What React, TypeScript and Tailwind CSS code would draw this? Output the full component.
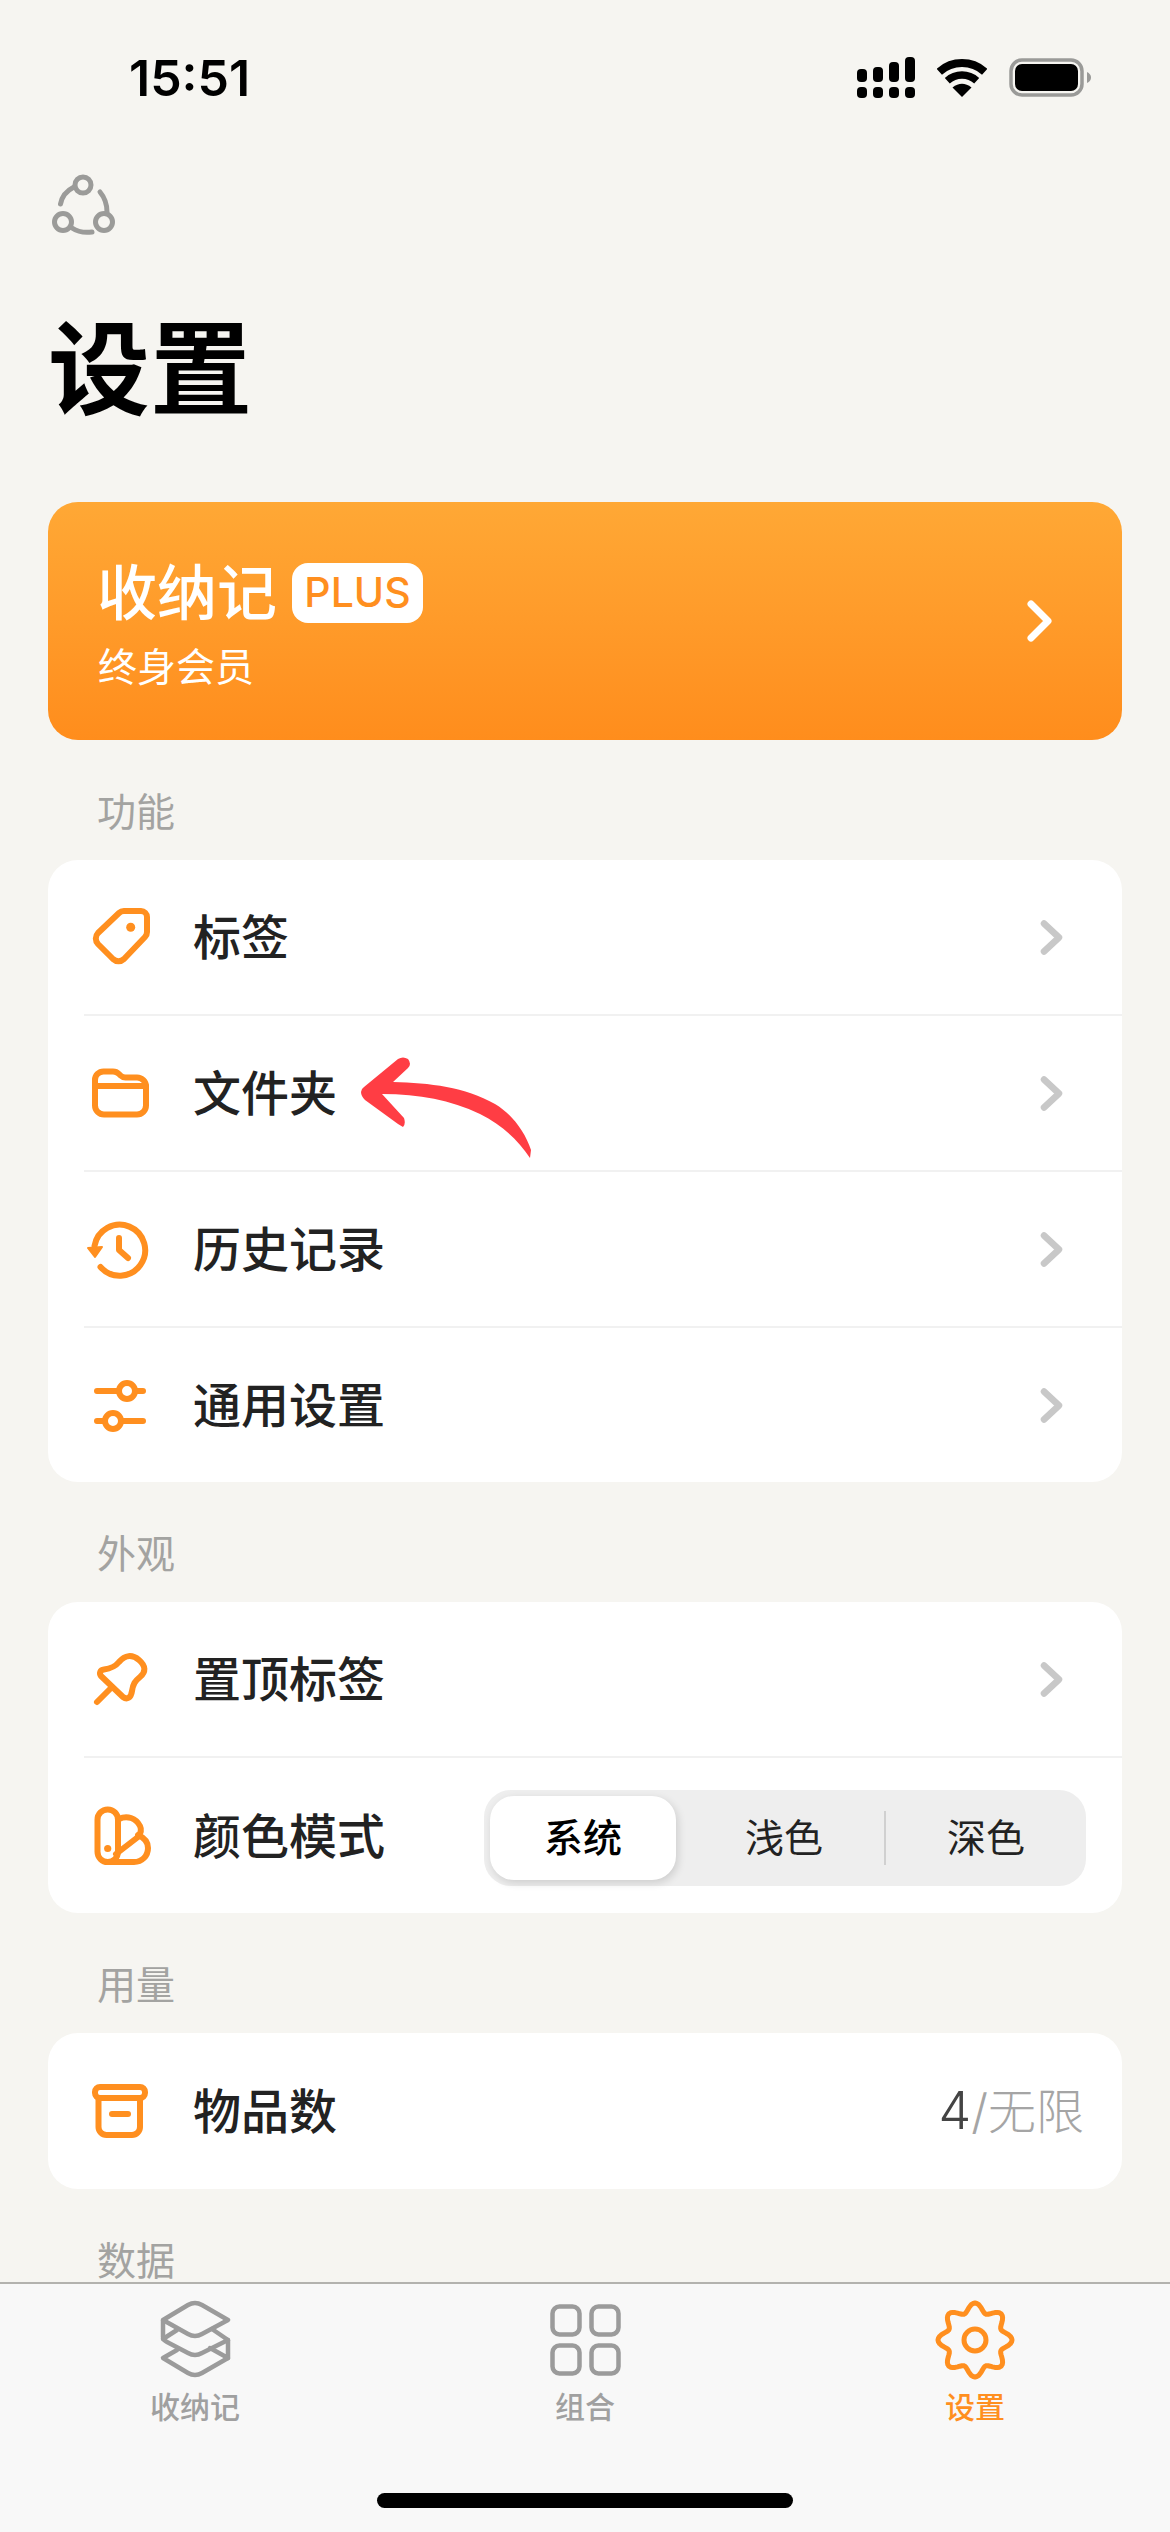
import type { ReactNode } from "react";

const orange = "#ff8f1f";

// 8 lobed outline for the settings tab
const gearPath = (() => {
    const pts: string[] = [];
    for (let a = 0; a < 360; a += 3) {
        const t = (a * Math.PI) / 180;
        const r = 32.5 + 4.5 * Math.cos(8 * t);
        pts.push(`${(45 + r * Math.sin(t)).toFixed(2)} ${(40 - r * Math.cos(t)).toFixed(2)}`);
    }
    return `M${pts.join("L")}Z`;
})();

function RowIcon({ children }: { children: ReactNode }) {
    return (
        <svg
            width="80"
            height="80"
            viewBox="0 0 80 80"
            fill="none"
            stroke={orange}
            strokeWidth="6"
            strokeLinecap="round"
            strokeLinejoin="round"
            className="shrink-0"
        >
            {children}
        </svg>
    );
}

function Chevron() {
    return (
        <svg width="27" height="41" viewBox="0 0 27 41" fill="none" stroke="#c8c8c8" strokeWidth="6.5" strokeLinecap="round" strokeLinejoin="round" className="shrink-0">
            <path d="M5 6.5 L20 20.5 L5 34.5" />
        </svg>
    );
}

function Row({ icon, label, height = "h-[154px]", children }: { icon: ReactNode; label: string; height?: string; children?: ReactNode }) {
    return (
        <div className={`flex items-center pl-[32px] ${height}`}>
            {icon}
            <span className="ml-[33px] pt-[2px] text-[48px] font-medium text-[#222222]">{label}</span>
            <div className="ml-auto flex items-center">{children ?? <div className="mr-[56px] flex"><Chevron /></div>}</div>
        </div>
    );
}

function Divider() {
    return <div className="ml-[36px] h-[2px] bg-[#f1f1f1]" />;
}

function SectionTitle({ text }: { text: string }) {
    return (
        <div className="flex h-[120px] items-center pl-[49px] pt-[24px] text-[39px] text-[#a3a3a1]">{text}</div>
    );
}

function StatusBar() {
    return (
        <div className="flex h-[160px] items-start justify-between pl-[129px] pr-[77px] pt-[57px]">
            <span className="mt-[1px] text-[50px] leading-[41px] font-semibold text-black">15:51</span>
            <div className="flex items-center gap-[22px]">
                <svg width="58" height="41" viewBox="0 0 58 41" fill="#000">
                    <rect x="0" y="12" width="10" height="13" rx="4" />
                    <rect x="16" y="10" width="10" height="15" rx="4" />
                    <rect x="32" y="5" width="10" height="20" rx="4" />
                    <rect x="48" y="0" width="10" height="25" rx="4" />
                    <rect x="0" y="30" width="10" height="11" rx="4" />
                    <rect x="16" y="30" width="10" height="11" rx="4" />
                    <rect x="32" y="30" width="10" height="11" rx="4" />
                    <rect x="48" y="30" width="10" height="11" rx="4" />
                </svg>
                <svg width="50" height="38" viewBox="0 0 50 38" fill="none" stroke="#000">
                    <path d="M2.3 12.7 A34 34 0 0 1 47.7 12.7" strokeWidth="8" />
                    <path d="M10.3 21.7 A22 22 0 0 1 39.7 21.7" strokeWidth="7.5" />
                    <path d="M25 38 L15.5 28.5 Q25 21 34.5 28.5 Z" fill="#000" stroke="none" />
                </svg>
                <svg width="84" height="39" viewBox="0 0 84 39" fill="none">
                    <rect x="2" y="2" width="71" height="35" rx="11" stroke="#9a9a98" strokeWidth="3.5" />
                    <rect x="6" y="6" width="63" height="27" rx="7" fill="#000" />
                    <path d="M78 14 Q82 16 82 19.5 Q82 23 78 25 Z" fill="#9a9a98" />
                </svg>
            </div>
        </div>
    );
}

function TabItem({ label, active, children }: { label: string; active?: boolean; children: ReactNode }) {
    return (
        <div className="flex flex-col items-center pt-[16px]">
            {children}
            <span className={`mt-[5px] text-[30px] leading-[44px] font-medium ${active ? "text-[#ff8f1f]" : "text-[#a0a0a0]"}`}>{label}</span>
        </div>
    );
}

export default function App() {
    return (
        <div className="relative h-[2532px] w-[1170px] overflow-hidden bg-[#f6f5f1] font-['Inter','Noto_Sans_CJK_SC',sans-serif]">
            <StatusBar />

            <svg width="90" height="90" viewBox="0 0 90 90" fill="none" stroke="#9b9b99" strokeWidth="5" strokeLinecap="round" className="ml-[40px]">
                <circle cx="43" cy="25" r="8" />
                <circle cx="23" cy="62" r="8.5" />
                <circle cx="64" cy="62" r="8.5" />
                <path d="M20.5 44 C22 36 26 31 34 27" />
                <path d="M60 32 C65 38 67 44 67 52" />
                <path d="M32 68 C38 72 45 73 52 72" />
            </svg>

            <h1 className="mt-[60px] pl-[48px] text-[102px] leading-[120px] font-bold text-black">设置</h1>

            <div className="mx-[48px] mt-[72px]">
                <div className="flex h-[238px] items-center justify-between rounded-[30px] bg-linear-to-b from-[#ffa835] to-[#ff8d1c] pl-[50px] pr-[67px]">
                    <div className="flex flex-col pt-[5px]">
                        <div className="-ml-[1px] flex h-[72px] items-center">
                            <span className="text-[60px] font-medium text-white">收纳记</span>
                            <span className="ml-[15px] flex h-[60px] w-[131px] items-center justify-center rounded-[16px] bg-white text-[41px] font-medium text-[#ff8f1f]">PLUS</span>
                        </div>
                        <span className="mt-[15px] text-[39px] leading-[46px] text-white">终身会员</span>
                    </div>
                    <svg width="32" height="44" viewBox="0 0 32 44" fill="none" stroke="#fff" strokeWidth="7" strokeLinecap="round" strokeLinejoin="round">
                        <path d="M8 5 L25 22 L8 39" />
                    </svg>
                </div>

                <SectionTitle text="功能" />
                <div className="rounded-[30px] bg-white">
                    <Row
                        label="标签"
                        icon={
                            <RowIcon>
                                <path d="M44 14 H61 a6 6 0 0 1 6 6 V35 a7 7 0 0 1 -2 5 L44 62 a8 8 0 0 1 -11 0 L18 47 a8 8 0 0 1 0 -11 L39 16 a7 7 0 0 1 5 -2 Z" />
                                <circle cx="50.7" cy="30.3" r="4.5" fill={orange} stroke="none" />
                            </RowIcon>
                        }
                    />
                    <Divider />
                    <Row
                        label="文件夹"
                        icon={
                            <RowIcon>
                                <path d="M15 30 V27 a8.5 8.5 0 0 1 8.5 -8.5 H33 c3 0 4.5 1 6 2.5 l1.5 1.5 c1.5 1.5 3 2 5 2 H57 a9 9 0 0 1 9 9 V52.5 a9 9 0 0 1 -9 9 H24 a9 9 0 0 1 -9 -9 Z" />
                                <path d="M15 33 H66" />
                            </RowIcon>
                        }
                    />
                    <Divider />
                    <Row
                        label="历史记录"
                        icon={
                            <RowIcon>
                                <path d="M14.5 37 A25.5 25.5 0 1 1 20.5 58" />
                                <path d="M8 39 L22 38 L15 48 Z" fill={orange} strokeWidth="2" />
                                <path d="M39 29 V41 L48 49" />
                            </RowIcon>
                        }
                    />
                    <Divider />
                    <Row
                        label="通用设置"
                        icon={
                            <RowIcon>
                                <path d="M17 26 H63 M17 56 H63" />
                                <circle cx="47" cy="26" r="8" fill="#fff" />
                                <circle cx="33" cy="56" r="8" fill="#fff" />
                            </RowIcon>
                        }
                    />
                </div>

                <SectionTitle text="外观" />
                <div className="rounded-[30px] bg-white">
                    <Row
                        label="置顶标签"
                        icon={
                            <RowIcon>
                                <path d="M21 37 C19 34 20 31 24 30.5 C31 29.5 35 28 39 23 C45 16 52 15 59 21 C66 27 66 33 60 38 C55 42 53 45 52 52 C51 59 47 61 43 58 Z" />
                                <path d="M32 48 L17 63" />
                            </RowIcon>
                        }
                    />
                    <Divider />
                    <Row
                        label="颜色模式"
                        height="h-[155px]"
                        icon={
                            <RowIcon>
                                <rect x="17.5" y="13.5" width="20.5" height="52.5" rx="10.2" />
                                <circle cx="27.7" cy="52.5" r="3.6" fill={orange} stroke="none" />
                                <path d="M39 23 C47 19 56 22 60 30 C62 34 61 37 58 41 L36 58" />
                                <path d="M58 39 C65 42 68 47 68 52 C68 60 62 66 54 66 H27" />
                            </RowIcon>
                        }
                    >
                        <div className="mr-[36px] mt-[5px] flex h-[96px] w-[602px] items-center rounded-[27px] bg-[#eeeeee] p-[6px] text-[39px] text-[#222222]">
                            <div className="flex h-[84px] w-[186px] items-center justify-center rounded-[24px] bg-white font-medium text-black shadow-[2px_3px_9px_rgba(0,0,0,0.14)]">系统</div>
                            <div className="flex w-[208px] justify-center pl-[8px]">浅色</div>
                            <div className="h-[54px] w-[2px] bg-[#d0d0d0]" />
                            <div className="flex w-[194px] justify-center pl-[6px]">深色</div>
                        </div>
                    </Row>
                </div>

                <SectionTitle text="用量" />
                <div className="rounded-[30px] bg-white">
                    <Row
                        label="物品数"
                        height="h-[156px]"
                        icon={
                            <RowIcon>
                                <rect x="15" y="16" width="50" height="11" rx="5" />
                                <path d="M18.5 27 V56 a8 8 0 0 0 8 8 H52 a8 8 0 0 0 8 -8 V27" />
                                <path d="M32 43 H48" />
                            </RowIcon>
                        }
                    >
                        <span className="mr-[38px] text-[48px] font-light text-[#a5a5a5]">
                            <span className="text-[52px] text-[#444444]">4</span>/无限
                        </span>
                    </Row>
                </div>

                <SectionTitle text="数据" />
            </div>

            {/* annotation drawn over the list */}
            <svg width="200" height="130" viewBox="0 0 200 130" fill="#ff3d44" className="absolute left-[340px] top-[1040px]">
                <path d="M21 52 Q21 49 24 47 L58 19 Q63 16 68 19 Q72 24 68 28 L53 42 C90 43 125 47 155 64 C172 74 185 92 191 110 L190 118 C178 100 162 85 140 74 C110 60 80 54 42 54 L64 78 Q66 84 63 87 L58 84 L25 60 Q21 56 21 52 Z" />
            </svg>

            <div className="absolute bottom-0 left-0 h-[250px] w-full border-t-2 border-[#b3b2ae] bg-[#f8f8f8]">
                <div className="grid grid-cols-3">
                    <TabItem label="收纳记">
                        <svg width="90" height="80" viewBox="10 20 90 80" fill="none" stroke="#9b9b9b" strokeWidth="4.5" strokeLinecap="round" strokeLinejoin="round">
                            <path d="M23 40 L48 25 Q55 21 62 25 L88 40 L62 54 Q55 58 48 54 Z" />
                            <path d="M23 41 V57 Q23 60 27 62 L48 73 Q55 77 62 73 L88 60 L72 49" />
                            <path d="M23 59 L37 50" />
                            <path d="M88 60 V78 M88 78 L70 68" />
                            <path d="M37 70 L23 78 L48 93 Q55 97 62 93 L88 78" />
                        </svg>
                    </TabItem>
                    <TabItem label="组合">
                        <svg width="90" height="80" viewBox="0 0 90 80" fill="none" stroke="#9b9b9b" strokeWidth="4.5">
                            <rect x="12.5" y="6.5" width="27" height="28" rx="7" />
                            <rect x="51.5" y="6.5" width="27" height="28" rx="7" />
                            <rect x="12.5" y="45.5" width="27" height="28" rx="7" />
                            <rect x="51.5" y="45.5" width="27" height="28" rx="7" />
                        </svg>
                    </TabItem>
                    <TabItem label="设置" active>
                        <svg width="90" height="80" viewBox="0 0 90 80" fill="none" stroke={orange} strokeWidth="5" strokeLinejoin="round">
                            <path d={gearPath} />
                            <circle cx="45" cy="40" r="11" />
                        </svg>
                    </TabItem>
                </div>
                <div className="absolute bottom-[24px] left-[377px] h-[15px] w-[416px] rounded-full bg-black" />
            </div>
        </div>
    );
}
